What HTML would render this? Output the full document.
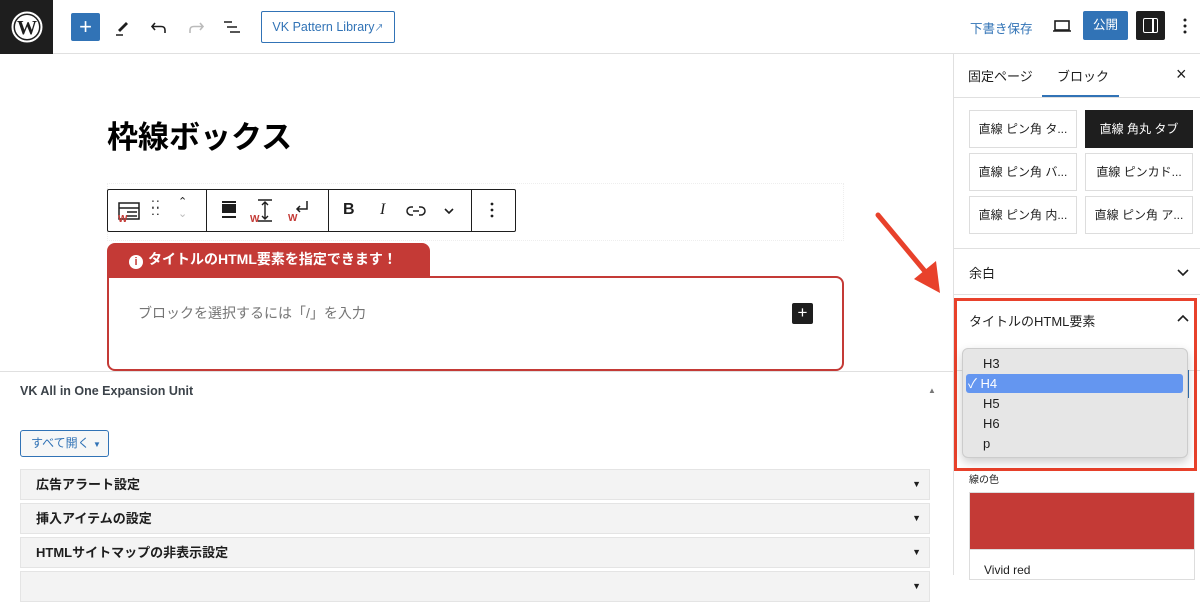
<!DOCTYPE html>
<html><head><meta charset="utf-8"><style>
*{box-sizing:border-box;margin:0;padding:0}
body{width:1200px;height:575px;overflow:hidden;background:#fff;font-family:"Liberation Sans","Noto Sans CJK JP",sans-serif;color:#1e1e1e;position:relative}
.a{position:absolute}
.sb{border:1px solid #ddd;background:#fff;font-size:12px;text-align:center;line-height:36px;width:108px;height:38px;white-space:nowrap;overflow:hidden}
.row{position:absolute;left:20px;width:910px;height:31px;background:#f3f3f3;border:1px solid #e4e4e4;font-size:13px;font-weight:bold;line-height:29px;padding-left:15px}
.row:after{content:"▼";position:absolute;right:8px;font-size:9px}
.it{position:absolute;left:20px;font-size:13px}
</style></head><body>
<div class="a" style="left:0;top:0;width:1200px;height:54px;border-bottom:1px solid #e0e0e0"></div>
<div class="a" style="left:0;top:0;width:53px;height:54px;background:#1e1e1e"></div>
<svg class="a" style="left:11px;top:11px" width="32" height="32" viewBox="0 0 32 32"><circle cx="16" cy="16" r="14.5" fill="none" stroke="#fff" stroke-width="2"/><circle cx="16" cy="16" r="12" fill="#fff"/><text x="16" y="23" text-anchor="middle" font-family="Liberation Serif" font-weight="bold" font-size="20" fill="#1e1e1e">W</text></svg>
<div class="a" style="left:71px;top:13px;width:29px;height:28px;background:#3173b6;border-radius:2px;color:#fff;font-size:22px;text-align:center;line-height:27px">+</div>
<svg class="a" style="left:113px;top:17px" width="20" height="20" viewBox="0 0 20 20"><path d="M5 13 L13 5 L15 7 L7 15 Z" fill="#1e1e1e"/><path d="M3 18 H10" stroke="#1e1e1e" stroke-width="1.5"/></svg>
<svg class="a" style="left:149px;top:17px" width="20" height="20" viewBox="0 0 20 20"><path d="M6 6 L3 9.5 L6 13 M3 9.5 H12 Q16 9.5 16 13 V16" fill="none" stroke="#1e1e1e" stroke-width="1.6"/></svg>
<svg class="a" style="left:186px;top:17px" width="20" height="20" viewBox="0 0 20 20"><path d="M14 6 L17 9.5 L14 13 M17 9.5 H8 Q4 9.5 4 13 V16" fill="none" stroke="#bbb" stroke-width="1.6"/></svg>
<svg class="a" style="left:222px;top:17px" width="20" height="20" viewBox="0 0 20 20"><path d="M2 5 H10 M5 10 H15 M8 15 H18" stroke="#1e1e1e" stroke-width="1.6"/></svg>
<div class="a" style="left:261px;top:11px;width:134px;height:32px;border:1px solid #3173b6;border-radius:2px;color:#3173b6;font-size:12.5px;line-height:30px;text-align:center">VK Pattern Library<span style="font-size:9px">↗</span></div>
<div class="a" style="left:970px;top:18px;font-size:12.5px;color:#3173b6">下書き保存</div>
<svg class="a" style="left:1052px;top:18px" width="20" height="16" viewBox="0 0 20 16"><rect x="3" y="3" width="14" height="9" fill="none" stroke="#1e1e1e" stroke-width="1.6"/><path d="M1 13 H19" stroke="#1e1e1e" stroke-width="1.6"/></svg>
<div class="a" style="left:1083px;top:11px;width:45px;height:29px;background:#3173b6;border-radius:2px;color:#fff;font-size:12.5px;text-align:center;line-height:29px">公開</div>
<div class="a" style="left:1136px;top:11px;width:29px;height:29px;background:#1e1e1e;border-radius:2px"></div>
<div class="a" style="left:1143px;top:18px;width:15px;height:15px;border:1.6px solid #fff;border-radius:2px"></div>
<div class="a" style="left:1152px;top:18px;width:1.6px;height:15px;background:#fff"></div>
<svg class="a" style="left:1180px;top:16px" width="10" height="20"><circle cx="5" cy="4" r="1.5" fill="#1e1e1e"/><circle cx="5" cy="10" r="1.5" fill="#1e1e1e"/><circle cx="5" cy="16" r="1.5" fill="#1e1e1e"/></svg>

<div class="a" style="left:107px;top:112px;font-size:31px;font-weight:bold;color:#000">枠線ボックス</div>
<div class="a" style="left:107px;top:183px;width:737px;height:58px;border:1px dotted #eee"></div>
<div class="a" style="left:107px;top:189px;width:409px;height:43px;border:1px solid #1e1e1e;border-radius:2px;background:#fff"></div>
<div class="a" style="left:206px;top:189px;width:1px;height:43px;background:#1e1e1e"></div>
<div class="a" style="left:328px;top:189px;width:1px;height:43px;background:#1e1e1e"></div>
<div class="a" style="left:471px;top:189px;width:1px;height:43px;background:#1e1e1e"></div>
<svg class="a" style="left:117px;top:199px" width="24" height="24" viewBox="0 0 24 24"><rect x="2" y="4" width="20" height="16" fill="none" stroke="#1e1e1e" stroke-width="1.5"/><path d="M2 9 H22 M10 13 H20 M10 17 H20" stroke="#1e1e1e" stroke-width="1.4"/><text x="1" y="23" font-size="10" fill="#c43a36" font-weight="bold">W</text></svg>
<div class="a" style="left:151px;top:200px;font-size:14px;line-height:7px;letter-spacing:1px">::<br>::</div>
<div class="a" style="left:178px;top:196px;font-size:11px;line-height:12px">⌃<br><span style="color:#bbb">⌄</span></div>
<div class="a" style="left:222px;top:204px;width:14px;height:9px;background:#1e1e1e"></div>
<div class="a" style="left:222px;top:201px;width:14px;height:1.5px;background:#1e1e1e"></div>
<div class="a" style="left:222px;top:216px;width:14px;height:1.5px;background:#1e1e1e"></div>
<svg class="a" style="left:250px;top:198px" width="26" height="26" viewBox="0 0 26 26"><path d="M8 2 H22 M8 23 H22 M15 4 V21 M12 7 L15 4 L18 7 M12 18 L15 21 L18 18" fill="none" stroke="#1e1e1e" stroke-width="1.4"/><text x="0" y="24" font-size="10" fill="#c43a36" font-weight="bold">W</text></svg>
<svg class="a" style="left:287px;top:198px" width="26" height="26" viewBox="0 0 26 26"><path d="M20 3 V11 H10 M13 8 L10 11 L13 14" fill="none" stroke="#1e1e1e" stroke-width="1.5"/><text x="1" y="23" font-size="10" fill="#c43a36" font-weight="bold">W</text></svg>
<div class="a" style="left:343px;top:201px;font-size:16px;font-weight:bold">B</div>
<div class="a" style="left:380px;top:201px;font-size:16px;font-style:italic;font-family:'Liberation Serif'">I</div>
<svg class="a" style="left:406px;top:203px" width="20" height="16" viewBox="0 0 20 16"><path d="M7 4 H5 A4 4 0 0 0 5 12 H7 M13 4 H15 A4 4 0 0 1 15 12 H13 M7 8 H13" fill="none" stroke="#1e1e1e" stroke-width="1.5"/></svg>
<svg class="a" style="left:442px;top:206px" width="14" height="10" viewBox="0 0 14 10"><path d="M3 3 L7 7 L11 3" fill="none" stroke="#1e1e1e" stroke-width="1.6"/></svg>
<svg class="a" style="left:488px;top:201px" width="8" height="20"><circle cx="4" cy="3" r="1.4" fill="#1e1e1e"/><circle cx="4" cy="9" r="1.4" fill="#1e1e1e"/><circle cx="4" cy="15" r="1.4" fill="#1e1e1e"/></svg>
<div class="a" style="left:107px;top:243px;width:323px;height:35px;background:#c43a36;border-radius:8px 8px 0 0;color:#fff;font-size:14px;font-weight:bold;line-height:33px;padding-left:22px"><span style="display:inline-block;width:14px;height:14px;border-radius:50%;background:#fff;color:#c43a36;font-size:11px;line-height:14px;text-align:center;vertical-align:-1px;margin-right:5px">i</span>タイトルのHTML要素を指定できます！</div>
<div class="a" style="left:107px;top:276px;width:737px;height:95px;border:2px solid #c43a36;border-radius:0 8px 8px 8px"></div>
<div class="a" style="left:138px;top:303px;font-size:14px;color:#757575">ブロックを選択するには「/」を入力</div>
<div class="a" style="left:792px;top:303px;width:21px;height:21px;background:#1e1e1e;border-radius:2px;color:#fff;text-align:center;line-height:20px;font-size:17px">+</div>

<div class="a" style="left:0;top:371px;width:953px;height:204px;background:#fff;border-top:1px solid #e0e0e0"></div>
<div class="a" style="left:20px;top:384px;font-size:12.5px;font-weight:bold;color:#3c434a">VK All in One Expansion Unit</div>
<div class="a" style="left:928px;top:386px;font-size:8px;color:#777">▲</div>
<div class="a" style="left:20px;top:430px;width:89px;height:27px;border:1px solid #3173b6;border-radius:3px;color:#3173b6;font-size:12px;line-height:25px;padding-left:10px;background:#f6f7f7">すべて開く <span style="font-size:8px">▼</span></div>
<div class="row" style="top:469px">広告アラート設定</div>
<div class="row" style="top:503px">挿入アイテムの設定</div>
<div class="row" style="top:537px">HTMLサイトマップの非表示設定</div>
<div class="row" style="top:571px"></div>

<div class="a" style="left:953px;top:54px;width:247px;height:521px;border-left:1px solid #e0e0e0;background:#fff"></div>
<div class="a" style="left:953px;top:97px;width:247px;height:1px;background:#e0e0e0"></div>
<div class="a" style="left:968px;top:66px;font-size:13px">固定ページ</div>
<div class="a" style="left:1057px;top:66px;font-size:13px">ブロック</div>
<div class="a" style="left:1042px;top:95px;width:77px;height:2px;background:#3173b6"></div>
<div class="a" style="left:1176px;top:64px;font-size:18px">×</div>
<div class="a sb" style="left:969px;top:110px">直線 ピン角 タ...</div>
<div class="a sb" style="left:1085px;top:110px;background:#1e1e1e;color:#fff;border-color:#1e1e1e">直線 角丸 タブ</div>
<div class="a sb" style="left:969px;top:153px">直線 ピン角 バ...</div>
<div class="a sb" style="left:1085px;top:153px">直線 ピンカド...</div>
<div class="a sb" style="left:969px;top:196px">直線 ピン角 内...</div>
<div class="a sb" style="left:1085px;top:196px">直線 ピン角 ア...</div>
<div class="a" style="left:953px;top:248px;width:247px;height:1px;background:#e0e0e0"></div>
<div class="a" style="left:969px;top:263px;font-size:13px">余白</div>
<svg class="a" style="left:1176px;top:268px" width="14" height="10"><path d="M2 2 L7 7 L12 2" fill="none" stroke="#1e1e1e" stroke-width="1.6"/></svg>
<div class="a" style="left:953px;top:294px;width:247px;height:1px;background:#e0e0e0"></div>
<div class="a" style="left:969px;top:311px;font-size:13px">タイトルのHTML要素</div>
<svg class="a" style="left:1176px;top:314px" width="14" height="10"><path d="M2 7 L7 2 L12 7" fill="none" stroke="#1e1e1e" stroke-width="1.6"/></svg>
<div class="a" style="left:953px;top:370px;width:247px;height:1px;background:#e0e0e0"></div>
<div class="a" style="left:1187px;top:370px;width:2px;height:28px;background:#3173b6"></div>
<div class="a" style="left:954px;top:298px;width:243px;height:173px;border:3px solid #e8412b"></div>
<div class="a" style="left:962px;top:348px;width:226px;height:110px;background:#e6e6e6;border:1px solid #ccc;border-radius:6px;box-shadow:0 4px 10px rgba(0,0,0,.2)"></div>
<div class="a" style="left:966px;top:374px;width:217px;height:19px;background:#6496f0;border-radius:3px"></div>
<div class="it" style="left:983px;top:356px">H3</div>
<div class="it" style="left:968px;top:376px;color:#fff;line-height:15px">✓ H4</div>
<div class="it" style="left:983px;top:396px">H5</div>
<div class="it" style="left:983px;top:416px">H6</div>
<div class="it" style="left:983px;top:436px">p</div>
<div class="a" style="left:969px;top:471px;font-size:10px">線の色</div>
<div class="a" style="left:969px;top:492px;width:226px;height:58px;background:#c43a36;border:1px solid #ddd"></div>
<div class="a" style="left:969px;top:550px;width:226px;height:30px;border:1px solid #ddd;border-top:0"></div>
<div class="a" style="left:984px;top:563px;font-size:12px">Vivid red</div>

<svg class="a" style="left:870px;top:205px" width="80" height="100"><path d="M8 10 L58 70" stroke="#e8412b" stroke-width="5" stroke-linecap="round"/><path d="M70 88 L44 74 L66 56 Z" fill="#e8412b"/></svg>
</body></html>
